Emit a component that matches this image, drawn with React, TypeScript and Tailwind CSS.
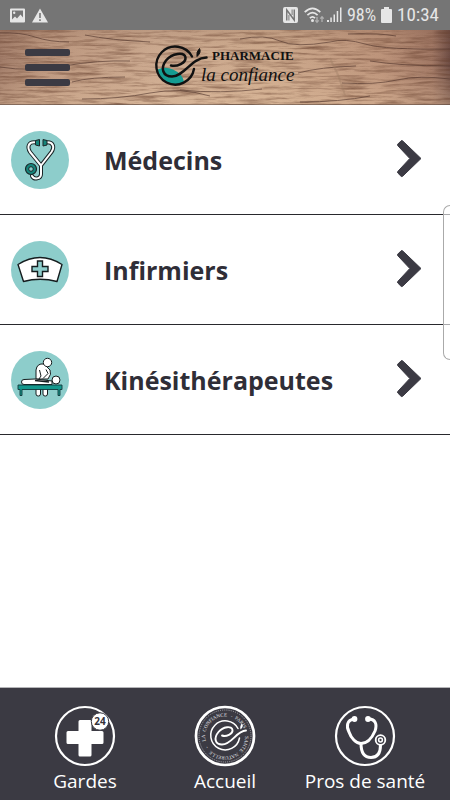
import React from 'react';

function StatusBar() {
  return (
    <div className="flex h-[30px] items-center justify-between bg-[#757575] pl-[10px] pr-[11px] text-[#e6e6e6]">
      <div className="flex items-center gap-[7px]">
        <svg width="15" height="15" viewBox="0 0 15 15" aria-hidden="true">
          <path fill="currentColor" fillRule="evenodd" d="M1 0.5h13a1 1 0 0 1 1 1v12a1 1 0 0 1-1 1H1a1 1 0 0 1-1-1v-12a1 1 0 0 1 1-1zM2 2.500v9l3-3 2 2 3.500-4 2.500 3v-7zM4.200 3.500a1.200 1.200 0 1 1 0 2.400 1.200 1.200 0 0 1 0-2.400z" />
        </svg>
        <svg width="16" height="15" viewBox="0 0 16 15" aria-hidden="true">
          <path fill="currentColor" fillRule="evenodd" d="M8 0.500L16 14.500H0zM7.200 5v5h1.600V5zM7.200 11.200v1.700h1.600v-1.700z" />
        </svg>
      </div>
      <div className="flex items-center font-['Roboto_Condensed',Roboto,sans-serif] text-[19px] leading-[30px]">
        <svg width="15" height="16" viewBox="0 0 16 16" preserveAspectRatio="none" aria-hidden="true" className="mr-[6px]">
          <rect width="16" height="16" rx="2" fill="currentColor" />
          <path d="M4 13.500V3l8 10V2.500" fill="none" stroke="#757575" strokeWidth="1.500" />
          <path d="M6.300 13.500V8M9.700 2.500V8" fill="none" stroke="#757575" strokeWidth="1" />
        </svg>
        <svg width="21" height="17" viewBox="0 0 21 17" aria-hidden="true" className="mr-[2px]">
          <g fill="none" stroke="currentColor" strokeWidth="1.700">
            <path d="M0.700 5.200Q8.500 -2.500 16.300 5.200M3.400 8.200Q8.500 3.200 13.600 8.200M5.900 11.200Q8.500 8.600 11 11.200" />
          </g>
          <circle cx="8.500" cy="13.500" r="1.500" fill="currentColor" />
          <path d="M13 10v5M11.300 13.300l1.700 2 1.700-2M18 15v-5M16.300 11.700l1.700-2 1.700 2" fill="none" stroke="#b0b0b0" strokeWidth="1.300" />
        </svg>
        <svg width="15" height="16" viewBox="0 0 15 16" aria-hidden="true" className="mr-[5px]">
          <path d="M0 13h2v2H0zM3.300 10.500h1.500V15H3.300zM6.500 7.500H8V15H6.500zM9.700 4h1.500v11H9.700zM13 0.500h1.500V15H13z" fill="currentColor" />
        </svg>
        <span className="text-[18px]">98%</span>
        <svg width="11" height="16" viewBox="0 0 11 16" aria-hidden="true" className="mx-[5px]">
          <path d="M3 0h5v2h2a1 1 0 0 1 1 1v12a1 1 0 0 1-1 1H1a1 1 0 0 1-1-1V3a1 1 0 0 1 1-1h2z" fill="currentColor" />
        </svg>
        <span>10:34</span>
      </div>
    </div>
  );
}

function Wood() {
  return (
    <svg className="absolute inset-0 h-full w-full" viewBox="0 0 450 75" preserveAspectRatio="none" aria-hidden="true">
      <defs>
        <linearGradient id="plank" x1="0" y1="0" x2="1" y2="0">
          <stop offset="0" stopColor="#a07b68" />
          <stop offset="0.1" stopColor="#bb967e" />
          <stop offset="0.35" stopColor="#ccaa90" />
          <stop offset="0.6" stopColor="#ceab8e" />
          <stop offset="0.85" stopColor="#bc937a" />
          <stop offset="0.96" stopColor="#a07764" />
          <stop offset="1" stopColor="#6b4a42" />
        </linearGradient>
        <linearGradient id="lowlight" x1="0" y1="0" x2="0" y2="1">
          <stop offset="0" stopColor="#6b4636" stopOpacity="0.15" />
          <stop offset="0.4" stopColor="#d8b394" stopOpacity="0" />
          <stop offset="1" stopColor="#e6c5a4" stopOpacity="0.4" />
        </linearGradient>
        <filter id="grain" x="0" y="0" width="100%" height="100%" colorInterpolationFilters="sRGB">
          <feTurbulence type="fractalNoise" baseFrequency="0.03 0.35" numOctaves="5" seed="8" />
          <feColorMatrix values="0 0 0 0 0.4  0 0 0 0 0.25  0 0 0 0 0.18  1.300 0 0 0 -0.540" />
        </filter>
      </defs>
      <rect width="450" height="75" fill="url(#plank)" />
      <rect width="450" height="75" fill="url(#lowlight)" />
      <rect width="450" height="75" filter="url(#grain)" />
      <g fill="none" stroke="#4b3028" strokeWidth="0.900" opacity="0.65">
        <path d="M0 3Q20 2 35 7T69 12M85 5Q110 10 150 12M240 9Q265 4 280 11T330 12Q345 8 365 14T450 19" />
        <path d="M348 4Q380 3 396 6M0 37Q30 42 64 36T130 31M72 52Q90 47 125 47M82 69Q120 69 150 63T210 66" />
        <path d="M342 53Q375 55 397 50T450 49M370 31Q400 36 450 36M298 43Q320 37 356 36M300 72Q340 72 370 66M180 60Q220 64 262 59" />
      </g>
      <path d="M330 28l8 17 7 20" fill="none" stroke="#9d7c65" strokeWidth="2" opacity="0.4" />
      <rect y="74" width="450" height="1" fill="#493831" opacity="0.5" />
    </svg>
  );
}

function Logo() {
  return (
    <svg width="144" height="56" viewBox="0 0 144 56" role="img" aria-label="Pharmacie la confiance" className="relative">
      <path d="M4.500 29.500Q12 26 20 29.500Q29 33.500 31 41.500Q26 45 19 44Q6 41 4.500 29.500z" fill="#159c92" />
      <path d="M39 16.500A19 19 0 1 0 41 29" fill="none" stroke="#111" strokeWidth="2.400" strokeLinecap="round" />
      <path d="M18 25.500C24 27 33 23 32.500 17.500C31.500 11.500 19 13 13 20.500C7 28.500 10 36.500 19 36.500C32 36 38 18 53.500 17.500" fill="none" stroke="#111" strokeWidth="2.500" strokeLinecap="round" />
      <path d="M44 16.500Q43 12 46.500 8.500Q48.500 12.500 44 16.500z" fill="#111" stroke="#111" />
      <text x="59" y="20" fontSize="13" fontWeight="700" fill="#111" className="font-['Liberation_Serif',serif]">PHARMACIE</text>
      <text x="48" y="41" fontSize="19" fontStyle="italic" fill="#111" className="font-['Liberation_Serif',serif]">la confiance</text>
    </svg>
  );
}

function Header() {
  return (
    <header className="relative flex h-[75px] items-center justify-center overflow-hidden">
      <Wood />
      <button type="button" aria-label="Menu" className="absolute left-[25px] top-[19px] flex w-[45px] flex-col gap-[8px]">
        <span className="h-[7px] rounded-[2px] bg-[#3b3a43]" />
        <span className="h-[7px] rounded-[2px] bg-[#3b3a43]" />
        <span className="h-[7px] rounded-[2px] bg-[#3b3a43]" />
      </button>
      <Logo />
    </header>
  );
}

function StethoscopeColor() {
  return (
    <svg viewBox="0 0 58 58" className="h-[58px] w-[58px]" aria-hidden="true">
      <g fill="none" strokeLinecap="round" strokeLinejoin="round">
        <path d="M25 11.500C17 10.500 16 16 19 21L30 34.500L40.500 21C44 16 42 10.500 35 11.500M30 34.500V43C30 48 23 49 21 45" stroke="#1b2527" strokeWidth="4" />
        <path d="M25 11.500C17 10.500 16 16 19 21L30 34.500L40.500 21C44 16 42 10.500 35 11.500M30 34.500V43C30 48 23 49 21 45" stroke="#fff" strokeWidth="2" />
      </g>
      <path d="M24.500 9.500l4-1v6.500l-4-1zM36 9.500l-4-1v6.500l4-1z" fill="#15857b" stroke="#1b2527" strokeWidth="1" />
      <circle cx="20" cy="38" r="5.500" fill="#15857b" stroke="#1b2527" strokeWidth="1.200" />
      <circle cx="20" cy="38" r="2.300" fill="#8dcdcb" stroke="#1b2527" />
    </svg>
  );
}

function NurseCap() {
  return (
    <svg viewBox="0 0 58 58" className="h-[58px] w-[58px]" aria-hidden="true">
      <path d="M7 23.500Q29 9.500 51 23.500L46 40.500Q29 36 12.500 40.500z" fill="#fff" stroke="#151c1e" strokeWidth="1.400" strokeLinejoin="round" />
      <path d="M26.500 20h5v5.500H37v5h-5.500V35.500h-5v-5H21v-5h5.500z" fill="#8dcdcb" stroke="#151c1e" strokeWidth="1.400" />
    </svg>
  );
}

function Massage() {
  return (
    <svg viewBox="0 0 58 58" className="h-[58px] w-[58px]" aria-hidden="true">
      <g fill="#fff" stroke="#151c1e" strokeWidth="1" strokeLinejoin="round">
        <rect x="25" y="35" width="4.500" height="10" rx="2" />
        <rect x="32" y="35" width="4.500" height="10" rx="2" />
        <path d="M25 28V19Q26 12 33 13L39 19Q41 23 37 28z" />
        <path d="M28.500 19l1.500 6-2 3M35 18.500l2 4-5 5" fill="none" />
        <circle cx="36.500" cy="11.500" r="4.200" />
        <path d="M13 28.500Q10.500 28.500 10.500 31T13 33.500H41V30L24 28z" />
        <circle cx="45" cy="29" r="4" />
      </g>
      <path d="M24 29.500l14 1.500" stroke="#151c1e" strokeWidth="1.500" />
      <path d="M7 34h44v4.500H49v6h-2v-6H11v6H9v-6H7z" fill="#15988d" stroke="#12383a" strokeWidth="0.900" />
    </svg>
  );
}

const rows = [
  { label: 'Médecins', icon: <StethoscopeColor /> },
  { label: 'Infirmiers', icon: <NurseCap /> },
  { label: 'Kinésithérapeutes', icon: <Massage /> },
];

function GardesIcon() {
  return (
    <svg width="62" height="62" viewBox="0 0 62 62" aria-hidden="true">
      <circle cx="31" cy="31" r="29" fill="none" stroke="#fff" strokeWidth="2.200" />
      <path d="M26 15h10a1.500 1.500 0 0 1 1.500 1.500V26H48a1.500 1.500 0 0 1 1.500 1.500v10A1.500 1.500 0 0 1 48 39H37.500v11a1.500 1.500 0 0 1-1.500 1.500H26a1.500 1.500 0 0 1-1.500-1.500V39H14a1.500 1.500 0 0 1-1.500-1.500v-10A1.500 1.500 0 0 1 14 26h10.500V16.500A1.500 1.500 0 0 1 26 15z" fill="#fff" />
      <circle cx="46" cy="16.500" r="8.700" fill="#fff" stroke="#3b3a43" strokeWidth="1" />
      <text x="46" y="20" textAnchor="middle" fontSize="10" fontWeight="700" fill="#33323a" className="font-['Open_Sans',sans-serif]">24</text>
    </svg>
  );
}

function AccueilIcon() {
  return (
    <svg width="62" height="62" viewBox="0 0 62 62" aria-hidden="true">
      <defs>
        <path id="ring" d="M11.700 36.200A20 20 0 1 1 11.750 36.400" />
      </defs>
      <circle cx="31" cy="31" r="29" fill="none" stroke="#fff" strokeWidth="2.700" />
      <circle cx="31" cy="31" r="26" fill="none" stroke="#d0d0d4" strokeWidth="0.700" strokeDasharray="1 1.200" />
      <text fontSize="5" fill="#e4e4e8" className="font-['Liberation_Serif',serif]">
        <textPath href="#ring">LA&#160;&#160;CONFIANCE&#160;&#160;&#160;-&#160;&#160;PARIS&#160;&#160;&#160;&#160;&#160;&#160;SANTE&#160;&#160;NATURELLE&#160;&#160;&#160;-</textPath>
      </text>
      <path d="M44 23.500A14.500 14.500 0 1 0 45.500 33" fill="none" stroke="#fff" strokeWidth="1.500" strokeLinecap="round" />
      <path d="M28 30.500C32 32 39 29 38.500 25C38 20.500 29 21.500 24.500 27C19.500 33 21 39.500 28 39.500C38 39.500 42 26 52 25.500" fill="none" stroke="#fff" strokeWidth="1.900" strokeLinecap="round" />
      <path d="M46.500 24.500Q45.500 21 48 18.500Q50 21.500 46.500 24.500z" fill="#fff" />
    </svg>
  );
}

function ProsIcon() {
  return (
    <svg width="62" height="62" viewBox="0 0 62 62" aria-hidden="true">
      <circle cx="31" cy="31" r="29" fill="none" stroke="#fff" strokeWidth="2.200" />
      <g fill="none" stroke="#fff" strokeWidth="3" strokeLinecap="round">
        <path d="M20 14C13 15 12 21 15 27C17 33 22 38.500 27 38.500C33 38.500 38 33 41 26C43.500 19 41 14 35 14" />
        <path d="M27 38.500C27 48 30 52.500 37 52.500C43.500 52.500 46.500 48 46.500 40" />
      </g>
      <circle cx="20.500" cy="14" r="2.900" fill="#fff" />
      <circle cx="34" cy="14" r="2.900" fill="#fff" />
      <circle cx="46.500" cy="35" r="4.800" fill="#3b3a43" stroke="#fff" strokeWidth="1.800" />
      <circle cx="46.500" cy="35" r="1.900" fill="none" stroke="#fff" strokeWidth="1.500" />
    </svg>
  );
}

const tabs = [
  { label: 'Gardes', icon: <GardesIcon /> },
  { label: 'Accueil', icon: <AccueilIcon /> },
  { label: 'Pros de santé', icon: <ProsIcon /> },
];

export default function App() {
  return (
    <div className="relative flex min-h-screen flex-col overflow-hidden bg-white">
      <StatusBar />
      <Header />
      <main className="flex-1">
        <ul>
          {rows.map((row) => (
            <li key={row.label}>
              <a href="#" className="flex h-[110px] items-center border-b border-[#29292d] pl-[11px] pr-[28px]">
                <span className="flex h-[58px] w-[58px] rounded-full bg-[#8dcdcb]">{row.icon}</span>
                <span className="ml-[35px] flex-1 font-['Open_Sans','Noto_Sans',sans-serif] text-[25px] font-bold leading-[32px] text-[#2f2e37]">{row.label}</span>
                <svg width="25" height="40" viewBox="0 0 25 40" aria-hidden="true">
                  <path d="M5.700 0.900L24 18.500L5.700 36.200Q4.800 37 4 36.200L0.800 33Q0 32.200 0.800 31.400L12.800 18.500L0.800 5.700Q0 4.900 0.800 4.100L4 0.900Q4.800 0.100 5.700 0.900z" fill="#3b3a43" stroke="#3b3a43" strokeWidth="1" />
                </svg>
              </a>
            </li>
          ))}
        </ul>
      </main>
      <nav className="flex h-[113px] border-t border-[#b5b5b8] bg-[#3b3a43] px-[15px]">
        {tabs.map((tab) => (
          <a key={tab.label} href="#" className="flex flex-1 flex-col items-center whitespace-nowrap pt-[17px] text-white">
            {tab.icon}
            <span className="font-['Open_Sans','Noto_Sans',sans-serif] text-[19px] leading-[28px]">{tab.label}</span>
          </a>
        ))}
      </nav>
      <div className="absolute right-0 top-[205px] h-[155px] w-[7px] rounded-l-[7px] border border-r-0 border-[#aaa] bg-white/60" />
    </div>
  );
}
